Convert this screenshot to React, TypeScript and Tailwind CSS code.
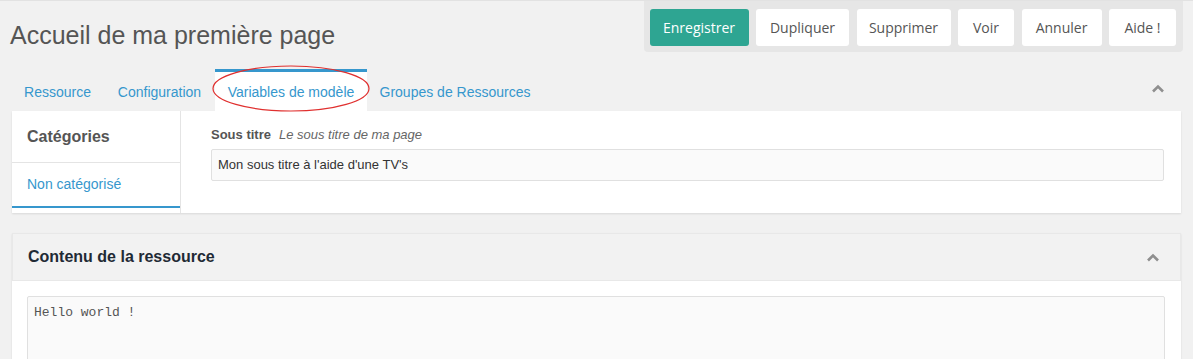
import React from "react";

const Caret = () => (
    <svg width="14" height="9" viewBox="0 0 14 9" fill="none">
        <path d="M2 7.5 L7 2.5 L12 7.5" stroke="#8f8f8f" strokeWidth="2.6" />
    </svg>
);

const buttons = [
    { label: "Dupliquer", w: "w-[93px]" },
    { label: "Supprimer", w: "w-[94px]" },
    { label: "Voir", w: "w-[56px]" },
    { label: "Annuler", w: "w-[80px]" },
    { label: "Aide !", w: "w-[67px]" },
];

const tabs = [
    { label: "Ressource", w: "w-[93px]" },
    { label: "Configuration", w: "w-[111px]" },
    { label: "Variables de modèle", w: "w-[152px]" },
    { label: "Groupes de Ressources", w: "w-[176px]" },
];

const App = () => {
    return (
        <div className="w-full h-[359px] overflow-hidden bg-[#f1f1f1] border-t border-[#e2e2e2] font-['Liberation_Sans',Arial,sans-serif]">
            {/* header */}
            <div className="flex items-start h-[68px]">
                <h1 className="pl-[10px] pt-[19px] text-[25px] leading-[30px] text-[#555]">
                    Accueil de ma première page
                </h1>
                <div className="ml-auto mr-[10px] -mt-px flex gap-[7.5px] bg-[#e6e6e6] rounded-b-[4px] pl-[6px] pr-[7px] pt-[9px] pb-[6px] font-['Open_Sans',sans-serif] text-[14px]">
                    <button className="h-[37px] w-[99px] rounded-[3px] bg-[#2ea592] text-white">
                        Enregistrer
                    </button>
                    {buttons.map((b) => (
                        <button
                            key={b.label}
                            className={`h-[37px] ${b.w} rounded-[3px] bg-white text-[#555]`}
                        >
                            {b.label}
                        </button>
                    ))}
                </div>
            </div>

            {/* tabs */}
            <div className="flex items-stretch pl-[11px] pr-[28px] h-[42px]">
                {tabs.map((t, i) =>
                    i === 2 ? (
                        <div
                            key={t.label}
                            className={`relative flex items-center justify-center ${t.w} bg-white border-t-[3px] border-[#3697cd] text-[14px] text-[#3697cd]`}
                        >
                            <span className="pt-[2px]">{t.label}</span>
                            <svg
                                className="absolute left-[-3px] top-[-7px] overflow-visible"
                                width="158"
                                height="47"
                                viewBox="0 0 158 47"
                                fill="none"
                            >
                                <ellipse cx="79" cy="23.5" rx="78" ry="22.5" stroke="#e0302f" strokeWidth="1.2" />
                            </svg>
                        </div>
                    ) : (
                        <div
                            key={t.label}
                            className={`flex items-center justify-center ${t.w} pt-[5px] text-[14px] text-[#3697cd]`}
                        >
                            {t.label}
                        </div>
                    )
                )}
                <div className="ml-auto flex items-center pb-[4px]">
                    <Caret />
                </div>
            </div>

            {/* template variables panel */}
            <div className="mx-[12px] h-[102px] flex bg-white shadow-[0_1px_2px_rgba(0,0,0,0.1)]">
                <div className="w-[169px] border-r border-[#e4e4e4] flex flex-col">
                    <div className="h-[52px] flex items-center pl-[15px] border-b border-[#e4e4e4] text-[16px] font-bold text-[#555]">
                        Catégories
                    </div>
                    <div className="h-[45px] flex items-center pl-[15px] border-b-2 border-[#3697cd] text-[14px] text-[#3697cd]">
                        Non catégorisé
                    </div>
                </div>
                <div className="flex-1 pl-[30px] pr-[17px] pt-[16px]">
                    <div className="text-[13px] leading-[16px] text-[#555]">
                        <span className="font-bold">Sous titre</span>
                        <span className="italic text-[#666] ml-[8px]">Le sous titre de ma page</span>
                    </div>
                    <div className="mt-[6px] h-[32px] flex items-center px-[6px] bg-[#fafafa] border border-[#e0e0e0] rounded-[2px] text-[13px] text-[#333]">
                        Mon sous titre à l'aide d'une TV's
                    </div>
                </div>
            </div>

            {/* content panel */}
            <div className="mx-[12px] mt-[20px] bg-white shadow-[0_1px_2px_rgba(0,0,0,0.1)]">
                <div className="h-[48px] flex items-center justify-between pl-[15px] pr-[20px] bg-[#f2f2f2] border border-[#e8e8e8]">
                    <h2 className="text-[16px] font-bold text-[#1f2a35]">Contenu de la ressource</h2>
                    <Caret />
                </div>
                <div className="pl-[15px] pr-[16px] pt-[15px] pb-[15px]">
                    <div className="h-[100px] px-[6px] pt-[6px] bg-[#fafafa] border border-[#e0e0e0] rounded-[2px] font-['Liberation_Mono',monospace] text-[13px] text-[#555]">
                        Hello world !
                    </div>
                </div>
            </div>
        </div>
    );
};

export default App;
